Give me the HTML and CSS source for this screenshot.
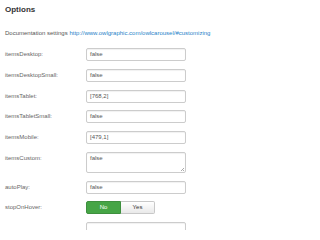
FILE: index.html
```html
<!DOCTYPE html>
<html>
<head>
<meta charset="utf-8">
<link rel="stylesheet" href="styles.css">
</head>
<body>
<div class="page">
  <h3 class="title">Options</h3>
  <p class="doc">Documentation settings <a class="link" href="#">http://www.owlgraphic.com/owlcarousel/#customizing</a></p>
  <div class="form">
    <div class="row"><label class="lbl">itemsDesktop:</label><div class="input">false</div></div>
    <div class="row"><label class="lbl">itemsDesktopSmall:</label><div class="input">false</div></div>
    <div class="row"><label class="lbl">itemsTablet:</label><div class="input">[768,2]</div></div>
    <div class="row"><label class="lbl">itemsTabletSmall:</label><div class="input">false</div></div>
    <div class="row"><label class="lbl">itemsMobile:</label><div class="input">[479,1]</div></div>
    <div class="row"><label class="lbl">itemsCustom:</label><div class="input textarea">false<span class="grip"></span></div></div>
    <div class="row"><label class="lbl">autoPlay:</label><div class="input">false</div></div>
    <div class="row"><label class="lbl">stopOnHover:</label><div class="toggle"><span class="opt on">No</span><span class="opt off">Yes</span></div></div>
    <div class="row"><span class="lbl"></span><div class="input"></div></div>
  </div>
</div>
</body>
</html>
```
FILE: styles.css
```css
html, body {
  margin: 0;
  padding: 0;
  background: #fff;
}
.page {
  padding: 5px 0 0 5px;
  font-family: "Liberation Sans", Arial, sans-serif;
  color: #333;
  height: 225px;
  overflow: hidden;
}
.title {
  margin: 0;
  font-size: 8px;
  line-height: 9px;
  font-weight: bold;
  color: #333;
}
.doc {
  margin: 0;
  padding-top: 15px;
  font-size: 6px;
  line-height: 8px;
  color: #555;
}
.link {
  color: #1f83c8;
  text-decoration: none;
}
.form {
  padding-top: 11px;
  display: flex;
  flex-direction: column;
  gap: 7.75px;
}
.row {
  display: flex;
  align-items: flex-start;
}
.lbl {
  width: 81px;
  flex: none;
  font-size: 6px;
  line-height: 13px;
  color: #666;
}
.input {
  box-sizing: border-box;
  width: 100px;
  height: 13px;
  border: 1px solid #ccc;
  border-radius: 2px;
  padding: 0 3px;
  font-size: 6px;
  line-height: 11px;
  color: #555;
  box-shadow: inset 0 1px 1px rgba(0,0,0,0.06);
  position: relative;
}
.textarea {
  height: 21px;
  line-height: 11px;
}
.grip {
  position: absolute;
  right: 1px;
  bottom: 1px;
  width: 3px;
  height: 3px;
  background: linear-gradient(135deg, transparent 45%, #aaa 45%, #aaa 55%, transparent 55%, transparent 75%, #aaa 75%);
}
.toggle {
  display: flex;
  height: 13px;
  width: 69px;
}
.opt {
  box-sizing: border-box;
  height: 13px;
  font-size: 6px;
  line-height: 11px;
  text-align: center;
}
.on {
  width: 35px;
  background: #46a546;
  border: 1px solid #3e8f3e;
  border-radius: 2px 0 0 2px;
  color: #fff;
}
.off {
  width: 34px;
  background: linear-gradient(#ffffff, #e9e9e9);
  border: 1px solid #c8c8c8;
  border-left: none;
  border-radius: 0 2px 2px 0;
  color: #333;
}
```
